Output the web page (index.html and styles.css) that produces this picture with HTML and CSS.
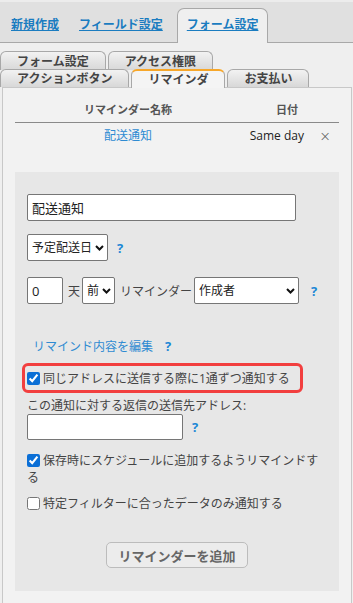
FILE: index.html
```html
<!DOCTYPE html>
<html lang="ja">
<head>
  <meta charset="UTF-8" />
  <meta name="viewport" content="width=device-width, initial-scale=1.0" />
  <title>リマインダ設定</title>
  <link rel="stylesheet" href="styles.css">
</head>
<body>
  <div class="topnav">
    <a class="top-tab" href="#">新規作成</a>
    <a class="top-tab" href="#">フィールド設定</a>
    <a class="top-tab active" href="#">フォーム設定</a>
  </div>

  <div class="subtabs">
    <div class="tab-row first">
      <span class="sub-tab">フォーム設定</span>
      <span class="sub-tab">アクセス権限</span>
    </div>
    <div class="tab-row">
      <span class="sub-tab">アクションボタン</span>
      <span class="sub-tab active">リマインダ</span>
      <span class="sub-tab">お支払い</span>
    </div>
  </div>

  <div class="panel">
    <div class="list-head">
      <span>リマインダー名称</span>
      <span class="col-date">日付</span>
    </div>
    <div class="list-row">
      <a class="col-name" href="#">配送通知</a>
      <span class="col-date">Same day</span>
      <span class="col-del">×</span>
    </div>

    <div class="form-box">
      <div class="field-row">
        <input class="text-input name-input" type="text" value="配送通知">
      </div>

      <div class="field-row gap-13">
        <span class="select-wrap">
          <select class="sel sel-date"><option>予定配送日</option></select>
          <svg class="chev" viewBox="0 0 9 6"><path d="M1 1 L4.5 4.5 L8 1" /></svg>
        </span>
        <span class="help ml-9">?</span>
      </div>

      <div class="field-row gap-16">
        <input class="text-input days-input" type="text" value="0">
        <span class="unit">天</span>
        <span class="select-wrap">
          <select class="sel sel-when"><option>前</option></select>
          <svg class="chev" viewBox="0 0 9 6"><path d="M1 1 L4.5 4.5 L8 1" /></svg>
        </span>
        <span class="unit">リマインダー</span>
        <span class="select-wrap">
          <select class="sel sel-who"><option>作成者</option></select>
          <svg class="chev" viewBox="0 0 9 6"><path d="M1 1 L4.5 4.5 L8 1" /></svg>
        </span>
        <span class="help ml-12">?</span>
      </div>

      <div class="edit-row">
        <a href="#">リマインド内容を編集</a><span class="help ml-12">?</span>
      </div>

      <label class="check highlight"><input type="checkbox" checked>同じアドレスに送信する際に1通ずつ通知する</label>

      <div class="reply-label">この通知に対する返信の送信先アドレス:</div>
      <div class="field-row">
        <input class="text-input reply-input" type="text">
        <span class="help ml-9">?</span>
      </div>

      <label class="check mt-12"><input type="checkbox" checked>保存時にスケジュールに追加するようリマインドする</label>
      <label class="check mt-9"><input type="checkbox">特定フィルターに合ったデータのみ通知する</label>

      <div class="actions">
        <button class="add-btn">リマインダーを追加</button>
      </div>
    </div>
  </div>
</body>
</html>
```

FILE: styles.css
```css
:root {
  --link: #1a7cc0;
  --link-soft: #2f8bd2;
  --tab-border: #a8a8a8;
  --text: #333;
}

body {
  margin: 0;
  font-family: "Open Sans", "Noto Sans CJK JP", sans-serif;
  font-size: 12px;
  color: var(--text);
  background: #efefef;
}

/* top navigation */
.topnav {
  display: flex;
  align-items: flex-end;
  height: 40px;
  padding-left: 1px;
  background: #e0e0e0;
  border-top: 2px solid #ececec;
  border-bottom: 1px solid var(--tab-border);
}

.top-tab {
  padding: 0 10px 8px;
  line-height: 18px;
  font-weight: bold;
  color: var(--link);
  text-decoration: underline;
}

.top-tab.active {
  margin-left: 4px;
  margin-bottom: -1px;
  padding: 7px 9px 9px;
  background: #efefef;
  border: 1px solid var(--tab-border);
  border-bottom: 0;
  border-radius: 7px 7px 0 0;
}

/* second level tabs */
.subtabs {
  padding-top: 8px;
}

.tab-row {
  display: flex;
  align-items: flex-end;
  gap: 2px;
}

.tab-row + .tab-row {
  margin-top: -1px;
}

.sub-tab {
  padding: 0 16px;
  line-height: 17px;
  font-weight: bold;
  color: #444;
  background: linear-gradient(#f2f2f2, #d8d8d8);
  border: 1px solid var(--tab-border);
  border-bottom: 0;
  border-radius: 6px 6px 0 0;
}

.tab-row.first .sub-tab {
  padding-top: 1px;
}

.sub-tab.active {
  position: relative;
  z-index: 1;
  margin-bottom: -1px;
  background: #f4f4f4;
  border-top: 2px solid #f7a72a;
}

/* panel */
.panel {
  margin: 0 1px 0 2px;
  padding: 0 12px 20px;
  background: #f2f2f2;
  border: 1px solid #c8c8c8;
}

.list-head {
  display: grid;
  grid-template-columns: 226px 1fr;
  padding: 13px 0 3px;
  line-height: 18px;
  font-size: 11px;
  font-weight: bold;
  color: #555;
  text-align: center;
  border-bottom: 1px solid #8a8a8a;
}

.list-head .col-date {
  padding-right: 6px;
}

.list-row {
  display: grid;
  grid-template-columns: 226px 1fr 28px;
  padding: 4px 0;
  line-height: 18px;
}

.list-row .col-name {
  text-align: center;
  color: var(--link-soft);
  text-decoration: none;
}

.list-row .col-date {
  text-align: right;
  padding-right: 7px;
  color: #222;
}

.list-row .col-del {
  text-align: center;
  font-family: "DejaVu Sans", sans-serif;
  font-size: 14px;
  font-weight: 300;
  color: #555;
}

/* reminder form */
.form-box {
  margin-top: 23px;
  padding: 22px 12px 23px;
  background: #e7e7e7;
}

.field-row {
  display: flex;
  align-items: center;
}

.gap-13 { margin-top: 13px; }
.gap-16 { margin-top: 16px; }
.ml-9 { margin-left: 9px; }
.ml-12 { margin-left: 12px; }
.mt-12 { margin-top: 12px; }
.mt-9 { margin-top: 9px; }

.text-input {
  box-sizing: border-box;
  height: 27px;
  padding: 0 4px;
  font-family: "Open Sans", "Noto Sans CJK JP", sans-serif;
  font-size: 13px;
  color: #222;
  background: #fff;
  border: 1px solid #767676;
  border-radius: 2px;
}

.name-input { width: 269px; }
.days-input { width: 36px; }
.reply-input { width: 156px; height: 26px; }

.select-wrap {
  position: relative;
  display: inline-block;
}

.sel {
  appearance: none;
  -webkit-appearance: none;
  box-sizing: border-box;
  height: 27px;
  padding: 0 14px 0 4px;
  font-family: "Open Sans", "Noto Sans CJK JP", sans-serif;
  font-size: 12px;
  color: #222;
  background: #fff;
  border: 1px solid #767676;
  border-radius: 2px;
}

.sel-date { width: 81px; }
.sel-when { width: 33px; }
.sel-who { width: 105px; }

.chev {
  position: absolute;
  right: 4px;
  top: 50%;
  width: 9px;
  height: 6px;
  margin-top: -3px;
  pointer-events: none;
}

.chev path {
  fill: none;
  stroke: #111;
  stroke-width: 2;
}

.unit {
  margin: 0 2px 0 5px;
  color: #444;
}

.help {
  font-size: 13px;
  font-weight: bold;
  color: #1c87d6;
}

.edit-row {
  margin-top: 34px;
  padding-left: 6px;
  line-height: 17px;
}

.edit-row a {
  color: var(--link-soft);
  text-decoration: none;
}

.check {
  display: block;
  line-height: 17px;
  color: #444;
}

.check input {
  width: 13px;
  height: 13px;
  margin: 0 3px 0 0;
  vertical-align: -2px;
  accent-color: #0b6fd6;
}

.highlight {
  width: fit-content;
  margin: 8px 0 0 -5px;
  padding: 4px 10px 3px 2px;
  border: 3px solid #f23f3f;
  border-radius: 6px;
}

.reply-label {
  margin-top: 4px;
  line-height: 17px;
  color: #444;
}

.actions {
  margin-top: 30px;
  text-align: center;
}

.add-btn {
  height: 26px;
  padding: 0 11px;
  font-family: "Open Sans", "Noto Sans CJK JP", sans-serif;
  font-size: 13px;
  font-weight: bold;
  color: #666;
  background: #ececec;
  border: 1px solid #bcbcbc;
  border-radius: 5px;
}
```
